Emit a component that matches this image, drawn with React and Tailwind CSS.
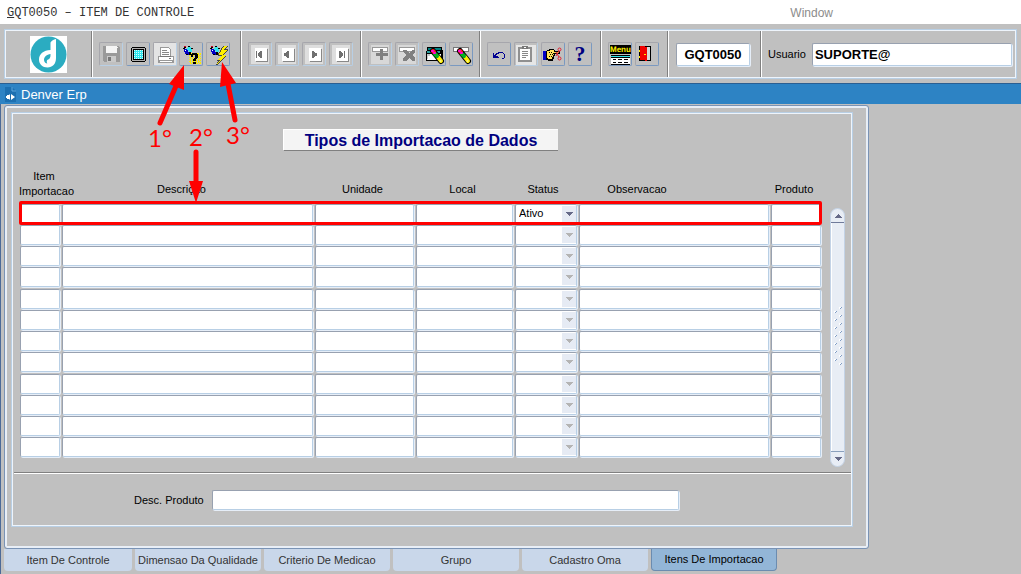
import clsx from 'clsx';

const columns = [
  { key: 'item', label: 'Item Importacao', col: 'w-[42px]', th: 'pb-1' },
  { key: 'descricao', label: 'Descrição', col: 'w-[253px]', th: 'pr-3 pb-1.5' },
  { key: 'unidade', label: 'Unidade', col: 'w-[101px]', th: 'pr-1 pb-1.5' },
  { key: 'local', label: 'Local', col: 'w-[99px]', th: 'pr-1 pb-1.5' },
  { key: 'status', label: 'Status', col: 'w-[64px]', th: 'pr-1.5 pb-1.5' },
  { key: 'observacao', label: 'Observacao', col: 'w-[192px]', th: 'pr-[74px] pb-1.5' },
  { key: 'produto', label: 'Produto', col: 'w-[52px]', th: 'pr-1 pb-1.5' },
];

const rows = Array.from({ length: 12 }, (_, i) => ({ id: i + 1, status: i === 0 ? 'Ativo' : '' }));

const tabs = ['Item De Controle', 'Dimensao Da Qualidade', 'Criterio De Medicao', 'Grupo', 'Cadastro Oma', 'Itens De Importacao'];

const field =
  'border border-t-[#98a1b0] border-l-[#98a1b0] border-r-[#b8cfe5] border-b-[#b8cfe5] rounded-[2px] bg-white shadow-[1px_1px_0_#e6eef8] outline-none';

const frame = 'border border-[#b8cfe5] shadow-[inset_0_0_0_1px_#eef4fb] p-px';

function Icon({ children }) {
  return (
    <svg viewBox="1 1 22 22" className="block size-[22px]" shapeRendering="crispEdges" aria-hidden="true">
      {children}
    </svg>
  );
}

function SaveIcon() {
  return (
    <Icon>
      <path d="M4 4h16v1h1v15H5v-1H4z" fill="#999" />
      <path d="M7 4h11v7H7z" fill="#f4f4f4" />
      <path d="M18 5h1v1h-1z" fill="#eee" />
      <path d="M8 14h9v6H8z" fill="#c9c9c9" />
      <path d="M9 15h3v4H9z" fill="#777" />
    </Icon>
  );
}

function ScreenIcon() {
  return (
    <Icon>
      <path d="M6 5h13v1h1v13h-1v1H6v-1H5V6h1z" fill="#000" />
      <path d="M6 6h13v13H6z" fill="#b0b0b0" />
      <path d="M7 7h11v11H7z" fill="#000" />
      <path d="M8 8h9v9H8z" fill="#2fe6ee" />
      <path d="M8 8.5h9M8 10.5h9M8 12.5h9M8 14.5h9M8 16.5h9" stroke="#d5fdff" strokeDasharray="1 1" />
    </Icon>
  );
}

function PrinterIcon() {
  return (
    <Icon>
      <path d="M1 1h22v22H1z" fill="#e4e4e4" />
      <path d="M7 5h9v1h1v1h1v7H7z" fill="#999" />
      <path d="M8 6h8v1h1v7H8z" fill="#fff" />
      <path d="M9 8.5h5M9 10.5h7M9 12.5h7" stroke="#888" />
      <path d="M5 14h16v7H5z" fill="#999" />
      <path d="M6 15h14v3H6zM7 19h12v1H7z" fill="#fff" />
      <path d="M7 14h11v1H7z" fill="#777" />
      <path d="M16 16h2v1h-2z" fill="#777" />
    </Icon>
  );
}

function Flashlight() {
  return (
    <g>
      <path d="M9 5h3v1h1v4h-1v1h-1v1h-1V9H9V8H8V6h1z" fill="#2fe6ee" />
      <path d="M5 7h3v1h1v2h1v3H8v-1H6v-2H5z" fill="#0000c8" />
      <path d="M5 4h1v1h1v1H6v1H4V6h1zM9 4h2v1H9zM12 6h2v1h-2zM10 10h2v3h-2zM7 12h2v1H7z" fill="#000" />
      <path d="M5 4h2v1H5z" fill="#d00020" />
      <path d="M6 8h1v1H6z" fill="#fff" />
    </g>
  );
}

function QueryIcon() {
  return (
    <Icon>
      <path d="M12 11.5h10M10 13.5h12M10 15.5h12M10 17.5h12M10 19.5h12M11 21.5h11" stroke="#ffef00" strokeDasharray="2 1" />
      <path d="M17 12.5h5M17 14.5h5M11 16.5h11M11 18.5h11M11 20.5h11" stroke="#f4e800" strokeDasharray="1 1" />
      <path d="M13 11h5v1h1v4h-1v1h-1v2h-3v-2h1v-1h1v-3h-2v2h-2v-3h1zM14 20h3v2h-3z" fill="#000" />
      <Flashlight />
    </Icon>
  );
}

function ExecuteIcon() {
  return (
    <Icon>
      <path d="M20 4h-3l-5 8v2h3l-4 5h1l-2 4h2l8-9v-1h-2l4-5v-1h-3l3-3z" fill="#444" />
      <path d="M21 4h-3l-5 8v1h3l-4 5h2l-3 4h1l8-9h-3l4-5h-3l3-4z" fill="#ffef00" />
      <Flashlight />
    </Icon>
  );
}

const navShapes = {
  first: 'M8 9h1v7H8zM14 9v7h-2v-1h-1v-1h-1v-3h1v-1h1V9z',
  prev: 'M14 9v7h-2v-1h-1v-1H9v-3h2v-1h1V9z',
  next: 'M10 9v7h2v-1h1v-1h2v-3h-2v-1h-1V9z',
  last: 'M16 9h-1v7h1zM10 9v7h2v-1h1v-1h1v-3h-1v-1h-1V9z',
};

function NavIcon({ kind }) {
  return (
    <Icon>
      <path d="M3 3h18v19H3z" fill="#dedede" />
      <path d="M8 7h12v13H8z" fill="#888" />
      <path d="M7 6h12v13H7z" fill="#fff" />
      <path d={navShapes[kind]} fill="#707070" />
    </Icon>
  );
}

function RecordIcon({ kind }) {
  return (
    <Icon>
      <path d="M3 3h18v19H3z" fill="#d8d8d8" />
      <path d="M4 5h16v5H4z" fill="#999" />
      <path d="M5 6h14v3H5z" fill="#fff" />
      {kind === 'insert' ? (
        <path d="M12 7h3v4h5v3h-5v4h-3v-4H8v-3h4z" fill="#808080" />
      ) : (
        <path d="M8 8h3l3 3 3-3h3v2l-3 3 3 3v3h-3l-3-3-3 3H8v-3l3-3-3-3z" fill="#808080" />
      )}
    </Icon>
  );
}

function Pencil() {
  return (
    <g fill="none" strokeLinecap="round" shapeRendering="auto">
      <path d="M11 9l8 10" stroke="#000" strokeWidth="6" />
      <path d="M16 15l3 4" stroke="#ffef00" strokeWidth="4" />
      <path d="M13 12l2 2" stroke="#00b020" strokeWidth="4" />
      <path d="M11 9l1 1" stroke="#ff2020" strokeWidth="4" />
      <path d="M10 9h1M12 11h1" stroke="#ff00e0" strokeWidth="2" />
      <path d="M18 19h1" stroke="#fff" />
    </g>
  );
}

function ClearFormIcon() {
  return (
    <Icon>
      <path d="M5 5h15v3h1v11H4V9h1z" fill="#000" />
      <path d="M6 6h13v2H6z" fill="#008080" />
      <path d="M5 9h13v2H5z" fill="#2aa0a0" />
      <path d="M5 12h14v6H5z" fill="#fff" />
      <path d="M5 12h3v2H6v3H5z" fill="#c8c8c8" />
      <Pencil />
    </Icon>
  );
}

function ClearRecordIcon() {
  return (
    <Icon>
      <path d="M4 5h16v5H4z" fill="#777" />
      <path d="M5 6h14v3H5z" fill="#fff" />
      <Pencil />
    </Icon>
  );
}

function UndoIcon() {
  return (
    <Icon>
      <path d="M6 11h1v2h1v-1h1v-1h2v-1h5v1h1v1h1v4h-1v1h-2v-1h2v-4h-1v-1h-4v1h-2v1h-1v1h2v1h1v1H6z" fill="#000090" />
    </Icon>
  );
}

function ClipboardIcon() {
  return (
    <Icon>
      <path d="M2 3h20v20H2z" fill="#e6e6e6" />
      <path d="M4 5h14v15H4z" fill="#909090" />
      <path d="M6 7h10v11H6z" fill="#fff" />
      <path d="M8 4h6v3H8z" fill="#777" />
      <path d="M10 5h2v1h-2z" fill="#fff" />
      <path d="M8 9.5h6M8 11.5h6M8 13.5h6M8 15.5h4" stroke="#888" />
    </Icon>
  );
}

function HandIcon() {
  return (
    <Icon>
      <path d="M2 9h4v9H2z" fill="#0000c8" />
      <path d="M6 8h2V7h5v1h1v1h5v3h-5v2h-1v3h-1v2H7v-1H5V9h1z" fill="#000" />
      <path d="M6 9h3V8h4v2h5v1h-6v1h1v1h-1v2h-1v2H7v-1H6z" fill="#ffe25a" />
      <path d="M8 10.5h4M9 12.5h3M8 14.5h3" stroke="#000" strokeDasharray="1 1" />
      <g fill="none" stroke="#e02030" shapeRendering="auto">
        <circle cx="18.5" cy="7.5" r="1.500" />
        <circle cx="18.5" cy="16.5" r="1.500" />
        <path d="M18 9l-3 5M18 15l-3-5" />
      </g>
    </Icon>
  );
}

function HelpIcon() {
  return (
    <span className="block h-[22px] text-center font-['Liberation_Serif',serif] text-[22px] leading-[22px] font-bold text-[#000080]">?</span>
  );
}

function MenuIcon() {
  return (
    <Icon>
      <path d="M2 3h21v9H2z" fill="#000" />
      <text x="2" y="10" textRendering="geometricPrecision" className="font-['Liberation_Sans',sans-serif] text-[8px] font-bold" fill="#ffef00">
        Menu
      </text>
      <path d="M3 13h19v10H3z" fill="#000" />
      <path d="M3 14h19v1H3z" fill="#2fe6ee" />
      <path d="M3 16h19v6H3z" fill="#fff" />
      <path d="M5 17.5h3M10 17.5h4M16 17.5h4M5 20.5h3M10 20.5h4M16 20.5h4" stroke="#000" />
    </Icon>
  );
}

function DoorIcon() {
  return (
    <Icon>
      <path d="M4 4h12v15H4z" fill="#000" />
      <path d="M11 5h4v13h-4z" fill="#d8d8d8" />
      <path d="M5 4h5v1h2v14h-2v-1H5z" fill="#f00000" />
      <path d="M4 8h1v2H4zM4 14h1v2H4zM9 12h2v1H9z" fill="#ffef00" />
    </Icon>
  );
}

function Logo() {
  return (
    <svg viewBox="0 0 37 37" className="size-[37px] bg-white" role="img" aria-label="Denver">
      <circle cx="18.5" cy="18.5" r="18" fill="#2bacc1" />
      <path d="M20.500 14V6.500c1.200-1.800 3-2.800 5.500-3.500v19c0 6-3.500 9.500-8.500 9.500-5 0-8.500-3.400-8.500-8 0-5.500 4.500-9.200 11.500-9.500z" fill="#fff" />
      <path d="M20.500 18c-3.800.6-6.500 2.800-6.500 5.800 0 2.400 1.600 3.600 3.300 3.600-1-1.500-.6-3.300.8-3.800 1.600-.6 2.700-2.300 2.400-5.600z" fill="#2bacc1" />
    </svg>
  );
}

const toolGroups = [
  {
    name: 'registro',
    width: 'w-[131px]',
    section: 'w-[149px]',
    items: [
      { label: 'Salvar', icon: <SaveIcon />, off: true },
      { label: 'Tela', icon: <ScreenIcon /> },
      { label: 'Imprimir', icon: <PrinterIcon />, off: true },
      { label: 'Entrar consulta', icon: <QueryIcon /> },
      { label: 'Executar consulta', icon: <ExecuteIcon /> },
    ],
  },
  {
    name: 'navegacao',
    width: 'w-[105px]',
    section: 'w-[120px]',
    items: [
      { label: 'Primeiro', icon: <NavIcon kind="first" />, off: true },
      { label: 'Anterior', icon: <NavIcon kind="prev" />, off: true },
      { label: 'Proximo', icon: <NavIcon kind="next" />, off: true },
      { label: 'Ultimo', icon: <NavIcon kind="last" />, off: true },
    ],
  },
  {
    name: 'edicao',
    width: 'w-[105px]',
    section: 'w-[119px]',
    items: [
      { label: 'Inserir', icon: <RecordIcon kind="insert" />, off: true },
      { label: 'Excluir', icon: <RecordIcon kind="remove" />, off: true },
      { label: 'Limpar tela', icon: <ClearFormIcon /> },
      { label: 'Limpar registro', icon: <ClearRecordIcon /> },
    ],
  },
  {
    name: 'ajuda',
    width: 'w-[105px]',
    section: 'w-[121px]',
    items: [
      { label: 'Desfazer', icon: <UndoIcon /> },
      { label: 'Colar', icon: <ClipboardIcon />, off: true },
      { label: 'Lista de valores', icon: <HandIcon /> },
      { label: 'Ajuda', icon: <HelpIcon /> },
    ],
  },
  {
    name: 'sistema',
    width: 'w-[51px]',
    section: 'w-[67px]',
    items: [
      { label: 'Menu', icon: <MenuIcon /> },
      { label: 'Sair', icon: <DoorIcon /> },
    ],
  },
];

function ToolButton({ label, icon, off }) {
  return (
    <button
      type="button"
      aria-label={label}
      disabled={off}
      className={clsx(
        'size-6 shrink-0 rounded-[2px] border border-t-[#a6a6ac] border-l-[#a6a6ac]',
        off ? 'border-r-[#b8cfe5] border-b-[#b8cfe5]' : 'border-r-[#7a99c0] border-b-[#7a99c0]'
      )}
    >
      {icon}
    </button>
  );
}

function Toolbar() {
  return (
    <div className="px-1 pt-[5px] pb-1">
      <div className={clsx(frame, 'flex h-[50px]')}>
        <div className="flex w-[86px] shrink-0 items-center justify-center border-r border-[#808080]">
          <Logo />
        </div>
        {toolGroups.map((group) => (
          <div key={group.name} className={clsx('flex shrink-0 items-center border-r border-r-[#808080] border-l border-l-white pl-1.5', group.section)}>
            <div className={clsx('flex justify-between', group.width)}>
              {group.items.map((item) => (
                <ToolButton key={item.label} {...item} />
              ))}
            </div>
          </div>
        ))}
        <div className="flex w-[93px] shrink-0 items-center border-r border-l border-r-[#808080] border-l-white pl-[7px]">
          <input aria-label="Programa" defaultValue="GQT0050" className={clsx(field, 'h-[23px] w-[74px] text-center text-[13px] font-bold')} />
        </div>
        <label className="flex min-w-0 flex-1 items-center gap-1.5 border-l border-l-white pr-[3px] pl-1.5 text-[11px]">
          Usuario
          <input defaultValue="SUPORTE@" className={clsx(field, 'h-[23px] min-w-0 flex-1 px-0.5 text-[13px] font-bold')} />
        </label>
      </div>
    </div>
  );
}

function StatusSelect({ value }) {
  return (
    <div className="relative">
      <select aria-label="Status" defaultValue={value} className={clsx(field, 'block h-5 w-full appearance-none px-[3px] text-[11px]')}>
        <option value=""></option>
        <option value="Ativo">Ativo</option>
      </select>
      <span className={clsx('pointer-events-none absolute top-0.5 right-px flex h-4 w-3.5 items-center justify-center bg-[#e6ebf4]', value ? 'text-[#666a88]' : 'text-[#b4b4b4]')}>
        <svg viewBox="0 0 8 4" className="h-1 w-2" shapeRendering="crispEdges">
          <path d="M0 0h8L4 4z" fill="currentColor" />
        </svg>
      </span>
    </div>
  );
}

function ItemsTable() {
  return (
    <div className="relative mt-[18px]">
      <table className="h-[289px] w-[803px] table-fixed border-separate border-spacing-0 text-[11px] leading-[15px]">
        <colgroup>
          {columns.map((c) => (
            <col key={c.key} className={c.col} />
          ))}
        </colgroup>
        <thead>
          <tr className="h-[34px]">
            {columns.map((c) => (
              <th key={c.key} className={clsx('p-0 align-bottom font-normal', c.th)}>
                {/* the first label is wider than its column */}
                <span className={clsx('block', c.key === 'item' && '-mr-2')}>{c.label}</span>
              </th>
            ))}
          </tr>
        </thead>
        <tbody>
          {rows.map((row) => (
            <tr key={row.id}>
              {columns.map((c) => (
                <td key={c.key} className="p-0 pr-px pl-px">
                  {c.key === 'status' ? (
                    <StatusSelect value={row.status} />
                  ) : (
                    <input aria-label={`${c.label} ${row.id}`} className={clsx(field, 'block h-5 w-full px-0.5')} />
                  )}
                </td>
              ))}
            </tr>
          ))}
        </tbody>
      </table>
      {/* selected record frame */}
      <div className="pointer-events-none absolute inset-x-0 top-8 h-6 rounded-[2px] border-[3px] border-[#ff0000]" />
    </div>
  );
}

function ScrollBar() {
  return (
    <div className="flex h-[259px] w-[15px] shrink-0 flex-col self-end overflow-hidden rounded-full border border-[#c4d3e6] bg-[#e8edf5]">
      <button type="button" aria-label="Subir" className="flex h-[14px] items-center justify-center border-b border-[#6f7a9a]">
        <svg viewBox="0 0 8 4" className="h-1 w-2" shapeRendering="crispEdges">
          <path d="M4 0l4 4H0z" fill="#666a88" />
        </svg>
      </button>
      <div className="flex flex-1 items-center justify-center border-l border-white">
        <svg viewBox="0 0 8 60" className="h-[60px] w-2" shapeRendering="crispEdges">
          {Array.from({ length: 15 }, (_, i) => (
            <g key={i}>
              <path d={`M${i % 2 ? 0 : 5} ${i * 4}h3v1h-1v1h-2z`} fill="#fff" />
              <path d={`M${i % 2 ? 1 : 6} ${i * 4 + 1}h1v-1h1v1h-1v1h-1z`} fill="#7f9cc4" />
            </g>
          ))}
        </svg>
      </div>
      <button type="button" aria-label="Descer" className="flex h-[15px] items-center justify-center border-t border-[#8aa0bd]">
        <svg viewBox="0 0 8 4" className="h-1 w-2" shapeRendering="crispEdges">
          <path d="M0 0h8L4 4z" fill="#666a88" />
        </svg>
      </button>
    </div>
  );
}

function Steps() {
  return (
    <div className="pointer-events-none absolute top-0 left-0 font-['Lato',sans-serif] text-[24px] leading-6 text-[#ff0000]">
      <svg viewBox="0 0 260 210" className="block h-[210px] w-[260px]" fill="#ff0000" stroke="#ff0000" strokeLinecap="round">
        <path d="M160 123l16-37M235 120l-7-36M196 152v32" strokeWidth="5" />
        <path d="M184 65l-15 19 15 6zM222 62l-2 25 16-4zM189 181h14l-7 22z" strokeWidth="0" />
      </svg>
      <span className="absolute top-[126px] left-[148px]">1°</span>
      <span className="absolute top-[125px] left-[189px]">2°</span>
      <span className="absolute top-[123px] left-[226px]">3°</span>
    </div>
  );
}

export default function App() {
  return (
    <div className="relative flex min-h-screen flex-col bg-[#c0c0c0] font-['Liberation_Sans',Arial,sans-serif] text-black">
      <header className="flex h-6 items-center bg-white pt-px pl-[7px] text-[12px]">
        <span className="font-['Liberation_Mono',monospace] text-[#333]">
          <span className="underline">G</span>QT0050 – ITEM DE CONTROLE
        </span>
        <span className="mr-[188px] ml-auto text-[#8c8c8c]">Window</span>
      </header>

      <Toolbar />

      <div className="flex h-[21px] items-center gap-1 border-t border-[#2b5f92] bg-[#2d83c4] pt-px pl-[5px] text-[13px] text-white">
        <svg viewBox="0 0 12 15" className="h-[15px] w-3" aria-hidden="true">
          <path d="M0 0h7l4 4v11H0z" fill="#1c6fb0" />
          <path d="M7 0v4h4" fill="none" stroke="#5aa6dc" />
          <path d="M5 7v6l-1-1H2v-1H1V9h1V8h2zM6 7l4 3-4 3z" fill="#fff" />
        </svg>
        Denver Erp
      </div>

      <main className="flex-1 border-l border-[#4c6a98] pt-px pl-[3px]">
        <section className="w-full max-w-[865px] rounded-[3px] border border-[#7a93b5] p-[5px] pt-1.5 pb-[21px] shadow-[inset_0_0_0_2px_#e8eef6]">
          <div className={clsx(frame, 'mr-[10px] ml-px')}>
            <div className="flex gap-2 pl-1.5">
              <div className="pt-[15px] pb-[9px]">
                <h1 className="mx-auto h-[22px] w-[275px] border-t border-b border-l border-t-white border-b-[#808080] border-l-white bg-[#f4f4f4] text-center text-[16px] leading-[21px] font-bold text-[#000080]">
                  Tipos de Importacao de Dados
                </h1>
                <ItemsTable />
              </div>
              <ScrollBar />
            </div>
            <hr className="mt-[5px] ml-px h-0.5 border-t border-b border-t-[#808080] border-b-white" />
            <label className="flex items-center gap-2 pt-4 pb-[15px] pl-[121px] text-[11px]">
              Desc. Produto
              <input className={clsx(field, 'h-5 w-[467px] px-0.5')} />
            </label>
          </div>
        </section>

        <nav className="flex gap-[3px]">
          {tabs.map((tab, i) => (
            <button
              key={tab}
              type="button"
              className={clsx(
                'h-[22px] w-[126px] shrink-0 rounded-b-[4px] text-[11px] whitespace-nowrap first:w-32',
                i === 5 ? 'border border-t-0 border-[#6b8cb0] bg-[#93b6d7] text-black' : 'bg-[#c9d7ea] text-[#333]'
              )}
            >
              {tab}
            </button>
          ))}
        </nav>
      </main>

      <Steps />
    </div>
  );
}
